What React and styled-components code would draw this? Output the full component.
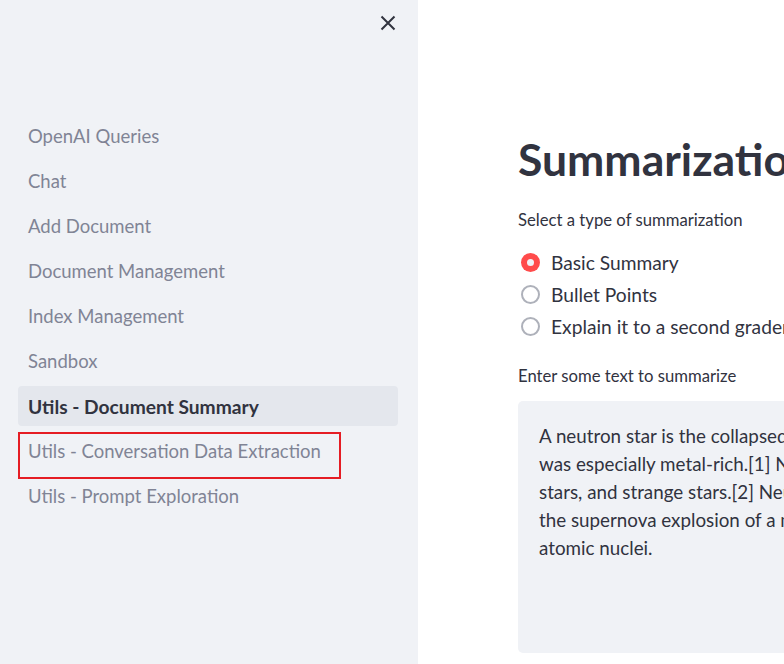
import React from "react";
import styled, { createGlobalStyle } from "styled-components";

const GlobalStyle = createGlobalStyle`
  html, body {
    margin: 0;
    padding: 0;
    overflow: hidden;
    background: #ffffff;
  }
  body {
    font-family: Lato, "Noto Sans", sans-serif;
    color: #31333f;
  }
`;

const Page = styled.div`
  display: flex;
  width: 784px;
  height: 664px;
  overflow: hidden;
`;

const Sidebar = styled.aside`
  flex: 0 0 418px;
  background: #f0f2f6;
  display: flex;
  flex-direction: column;
  padding: 0 20px 0 18px;
  box-sizing: border-box;
`;

const CloseRow = styled.div`
  display: flex;
  justify-content: flex-end;
  padding: 15px 2px 0 0;
  height: 116px;
  box-sizing: border-box;
`;

const CloseButton = styled.button`
  border: none;
  background: none;
  padding: 0;
  width: 16px;
  height: 16px;
  cursor: pointer;
  color: #31333f;
`;

const Nav = styled.nav`
  display: flex;
  flex-direction: column;
  gap: 5px;
`;

const NavItem = styled.div`
  position: relative;
  height: 40px;
  display: flex;
  align-items: center;
  padding: 0 10px;
  border-radius: 4px;
  font-size: ${p => (p.active ? "19.2px" : "18.5px")};
  font-weight: ${p => (p.active ? 700 : 400)};
  color: ${p => (p.active ? "#31333f" : "#808495")};
  background: ${p => (p.active ? "#e4e7ed" : "transparent")};
  white-space: nowrap;
`;

const Highlight = styled.span`
  position: absolute;
  left: 0;
  top: 1px;
  width: 323px;
  height: 47px;
  border: 2px solid #e51d24;
  box-sizing: border-box;
  pointer-events: none;
`;

const Main = styled.main`
  flex: 1 1 auto;
  min-width: 0;
  overflow: hidden;
  padding: 128px 0 0 100px;
`;

const Content = styled.div`
  width: 720px;
`;

const Title = styled.h1`
  margin: 0 0 20px;
  font-size: 44.5px;
  font-weight: 700;
  line-height: 62px;
  white-space: nowrap;
  color: #31333f;
`;

const Label = styled.div`
  font-size: 16.7px;
  line-height: 20px;
  color: #31333f;
  white-space: nowrap;
`;

const RadioGroup = styled.div`
  display: flex;
  flex-direction: column;
  margin: 16px 0 24px;
`;

const RadioRow = styled.label`
  display: flex;
  align-items: center;
  height: 32px;
  gap: 11px;
  font-size: 19.2px;
  white-space: nowrap;
  padding-left: 3px;
`;

const RadioDot = styled.span`
  width: 19px;
  height: 19px;
  border-radius: 50%;
  box-sizing: border-box;
  flex: 0 0 auto;
  background: ${p => (p.checked ? "#ff4b4b" : "#ffffff")};
  border: ${p => (p.checked ? "none" : "2px solid #aeb1ba")};
  display: flex;
  align-items: center;
  justify-content: center;
  &::after {
    content: "";
    width: 7px;
    height: 7px;
    border-radius: 50%;
    background: #f0f2f6;
    display: ${p => (p.checked ? "block" : "none")};
  }
`;

const TextBox = styled.div`
  margin-top: 15px;
  height: 252px;
  background: #f0f2f6;
  border-radius: 5px;
  padding: 21px 21px;
  box-sizing: border-box;
  font-size: 18.8px;
  line-height: 28px;
  color: #31333f;
  white-space: pre;
  overflow: hidden;
`;

const pages = [
  "OpenAI Queries",
  "Chat",
  "Add Document",
  "Document Management",
  "Index Management",
  "Sandbox",
  "Utils - Document Summary",
  "Utils - Conversation Data Extraction",
  "Utils - Prompt Exploration",
];

const options = ["Basic Summary", "Bullet Points", "Explain it to a second grader"];

const text = [
  "A neutron star is the collapsed core of a massive supergiant star, which had a total mass of between 10 and 25 solar masses, possibly more if the star",
  "was especially metal-rich.[1] Neutron stars are the smallest and densest stellar objects, excluding black holes, hypothetical white holes, quark",
  "stars, and strange stars.[2] Neutron stars have a radius on the order of 10 kilometres (6.2 mi) and a mass of about 1.4 solar masses.[3] They result from",
  "the supernova explosion of a massive star, combined with gravitational collapse, that compresses the core past white dwarf star density to that of",
  "atomic nuclei.",
].join("\n");

export default function App() {
  return (
    <Page>
      <GlobalStyle />
      <Sidebar>
        <CloseRow>
          <CloseButton aria-label="Close">
            <svg width="16" height="16" viewBox="0 0 16 16">
              <path d="M1.5 1.5 L14.5 14.5 M14.5 1.5 L1.5 14.5" stroke="currentColor" strokeWidth="2" />
            </svg>
          </CloseButton>
        </CloseRow>
        <Nav>
          {pages.map((name, i) => (
            <NavItem key={name} active={i === 6}>
              {name}
              {i === 7 && <Highlight />}
            </NavItem>
          ))}
        </Nav>
      </Sidebar>
      <Main>
        <Content>
          <Title>Summarization</Title>
          <Label>Select a type of summarization</Label>
          <RadioGroup>
            {options.map((o, i) => (
              <RadioRow key={o}>
                <RadioDot checked={i === 0} />
                {o}
              </RadioRow>
            ))}
          </RadioGroup>
          <Label>Enter some text to summarize</Label>
          <TextBox>{text}</TextBox>
        </Content>
      </Main>
    </Page>
  );
}
